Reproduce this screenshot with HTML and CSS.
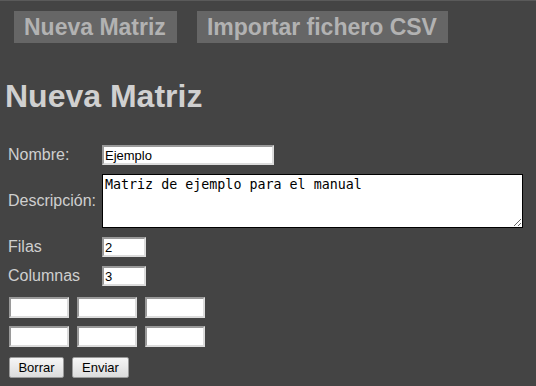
FILE: index.html
```html
<!DOCTYPE html>
<html lang="es">
<head>
<meta charset="utf-8">
<title>Nueva Matriz</title>
<link rel="stylesheet" href="styles.css">
</head>
<body>
<nav class="nav">
  <a class="nav-btn" href="#">Nueva Matriz</a>
  <a class="nav-btn" href="#">Importar fichero CSV</a>
</nav>
<h1 class="title">Nueva Matriz</h1>
<form class="form">
  <div class="fields">
    <label class="label" for="nombre">Nombre:</label>
    <input id="nombre" class="txt name" type="text" value="Ejemplo">
    <label class="label" for="desc">Descripción:</label>
    <textarea id="desc" class="desc">Matriz de ejemplo para el manual</textarea>
    <label class="label" for="filas">Filas</label>
    <input id="filas" class="txt small" type="text" value="2">
    <label class="label" for="cols">Columnas</label>
    <input id="cols" class="txt small" type="text" value="3">
  </div>
  <div class="matrix">
    <input class="txt cell" type="text"><input class="txt cell" type="text"><input class="txt cell" type="text">
    <input class="txt cell" type="text"><input class="txt cell" type="text"><input class="txt cell" type="text">
  </div>
  <div class="actions">
    <button class="btn" type="reset">Borrar</button>
    <button class="btn" type="button">Enviar</button>
  </div>
</form>
</body>
</html>
```
FILE: styles.css
```css
html, body {
  margin: 0;
  padding: 0;
}
body {
  background: #444444;
  border-top: 1px solid #5a5a5a;
  font-family: "Liberation Sans", Arial, sans-serif;
  color: #cfcfcf;
  height: 385px;
  overflow: hidden;
}
.nav {
  display: flex;
  gap: 20px;
  padding: 10px 0 0 14px;
}
.nav-btn {
  display: block;
  background: #666666;
  color: #b2b2b2;
  font-weight: bold;
  font-size: 23px;
  line-height: 32px;
  height: 32px;
  padding: 0 11px 0 10px;
  text-decoration: none;
}
.title {
  margin: 35px 0 0 5px;
  font-size: 32px;
  line-height: 36px;
  font-weight: bold;
  color: #d0d0d0;
}
.form {
  margin: 31px 0 0 8px;
}
.fields {
  display: grid;
  grid-template-columns: 94px auto;
  row-gap: 9px;
  align-items: center;
  justify-items: start;
}
.label {
  font-size: 16px;
}
.txt {
  box-sizing: border-box;
  background: #ffffff;
  border: 2px solid;
  border-color: #9a9a9a #dcdcdc #dcdcdc #9a9a9a;
  font-family: "Liberation Sans", Arial, sans-serif;
  font-size: 13px;
  color: #000;
  padding: 0 1px;
  margin: 0;
  height: 20px;
  display: block;
}
.name {
  width: 172px;
}
.desc {
  display: block;
  box-sizing: border-box;
  width: 421px;
  height: 54px;
  margin: 0;
  border: 1px solid #000;
  background: #fff;
  font-family: "DejaVu Sans Mono", monospace;
  font-size: 13.33px;
  color: #000;
  padding: 2px 2px;
  resize: both;
}
.small {
  width: 44px;
}
.matrix {
  display: grid;
  grid-template-columns: repeat(3, 60px);
  column-gap: 8px;
  row-gap: 8px;
  margin: 11px 0 0 1px;
}
.cell {
  width: 60px;
  height: 21px;
}
.actions {
  display: flex;
  gap: 8px;
  margin: 10px 0 0 1px;
}
.btn {
  box-sizing: border-box;
  height: 21px;
  padding: 0 8px;
  background: linear-gradient(#f6f6f6, #dcdcdc);
  border: 1px solid #9a9a9a;
  border-radius: 2px;
  font-family: "Liberation Sans", Arial, sans-serif;
  font-size: 13px;
  color: #000;
}
.btn:first-child {
  width: 55px;
}
.btn:last-child {
  width: 57px;
}
```
